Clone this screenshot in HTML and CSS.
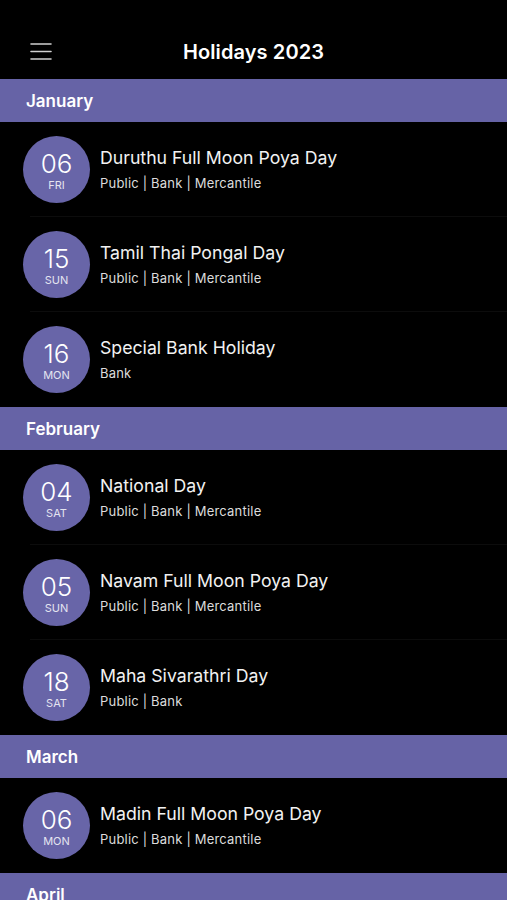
FILE: index.html
```html
<!DOCTYPE html>
<html lang="en">
<head>
    <meta charset="UTF-8">
    <meta name="viewport" content="width=device-width, initial-scale=1.0">
    <title>Holidays 2023</title>
    <link rel="stylesheet" href="styles.css">
</head>
<body>

    <header class="top-bar">
        <button class="menu-btn" aria-label="Menu">
            <svg width="22" height="18" viewBox="0 0 22 18">
                <path d="M1 2h20M1 9.5h20M1 17h20" stroke="#d0d0d0" stroke-width="1.6" stroke-linecap="round"/>
            </svg>
        </button>
        <h1>Holidays 2023</h1>
    </header>

    <div class="month">January</div>
    <div class="holiday">
        <div class="date"><span class="day">06</span><span class="wd">FRI</span></div>
        <div class="info">
            <div class="name">Duruthu Full Moon Poya Day</div>
            <div class="type">Public | Bank | Mercantile</div>
        </div>
    </div>
    <div class="holiday">
        <div class="date"><span class="day">15</span><span class="wd">SUN</span></div>
        <div class="info">
            <div class="name">Tamil Thai Pongal Day</div>
            <div class="type">Public | Bank | Mercantile</div>
        </div>
    </div>
    <div class="holiday last">
        <div class="date"><span class="day">16</span><span class="wd">MON</span></div>
        <div class="info">
            <div class="name">Special Bank Holiday</div>
            <div class="type">Bank</div>
        </div>
    </div>

    <div class="month">February</div>
    <div class="holiday">
        <div class="date"><span class="day">04</span><span class="wd">SAT</span></div>
        <div class="info">
            <div class="name">National Day</div>
            <div class="type">Public | Bank | Mercantile</div>
        </div>
    </div>
    <div class="holiday">
        <div class="date"><span class="day">05</span><span class="wd">SUN</span></div>
        <div class="info">
            <div class="name">Navam Full Moon Poya Day</div>
            <div class="type">Public | Bank | Mercantile</div>
        </div>
    </div>
    <div class="holiday last">
        <div class="date"><span class="day">18</span><span class="wd">SAT</span></div>
        <div class="info">
            <div class="name">Maha Sivarathri Day</div>
            <div class="type">Public | Bank</div>
        </div>
    </div>

    <div class="month">March</div>
    <div class="holiday last">
        <div class="date"><span class="day">06</span><span class="wd">MON</span></div>
        <div class="info">
            <div class="name">Madin Full Moon Poya Day</div>
            <div class="type">Public | Bank | Mercantile</div>
        </div>
    </div>

    <div class="month">April</div>

</body>
</html>
```

FILE: styles.css
```css
body {
    font-family: Inter, "Open Sans", sans-serif;
    background-color: #000;
    color: #fff;
    margin: 0;
    overflow: hidden;
}
.top-bar {
    height: 79px;
    display: flex;
    align-items: center;
    justify-content: center;
    position: relative;
    padding-top: 25px;
    box-sizing: border-box;
}
.top-bar h1 {
    margin: 0;
    font-size: 20px;
    font-weight: 600;
    letter-spacing: 0.1px;
}
.menu-btn {
    position: absolute;
    left: 30px;
    top: 42px;
    background: none;
    border: none;
    padding: 0;
    line-height: 0;
}
.month {
    background-color: #6663a6;
    height: 43px;
    line-height: 44px;
    padding-left: 26px;
    font-size: 17px;
    font-weight: 600;
}
.holiday {
    height: 95px;
    display: flex;
    align-items: center;
    padding-left: 23px;
    position: relative;
}
.holiday::after {
    content: "";
    position: absolute;
    left: 30px;
    right: 0;
    bottom: 0;
    height: 1px;
    background-color: #0c0c0c;
}
.holiday.last::after {
    display: none;
}
.date {
    width: 67px;
    height: 67px;
    border-radius: 50%;
    background-color: #6865a8;
    display: flex;
    flex-direction: column;
    align-items: center;
    justify-content: center;
    gap: 2px;
    flex-shrink: 0;
}
.day {
    font-size: 26px;
    font-weight: 300;
    line-height: 26px;
    margin-top: 2px;
}
.wd {
    font-size: 11px;
    line-height: 12px;
    color: #e4e4f0;
}
.info {
    margin-left: 10px;
    margin-top: -2px;
}
.name {
    font-size: 17.7px;
    line-height: 24px;
    color: #f2f2f2;
}
.type {
    font-size: 13px;
    letter-spacing: 0.2px;
    line-height: 18px;
    color: #dcdcdc;
    margin-top: 4px;
}
```
